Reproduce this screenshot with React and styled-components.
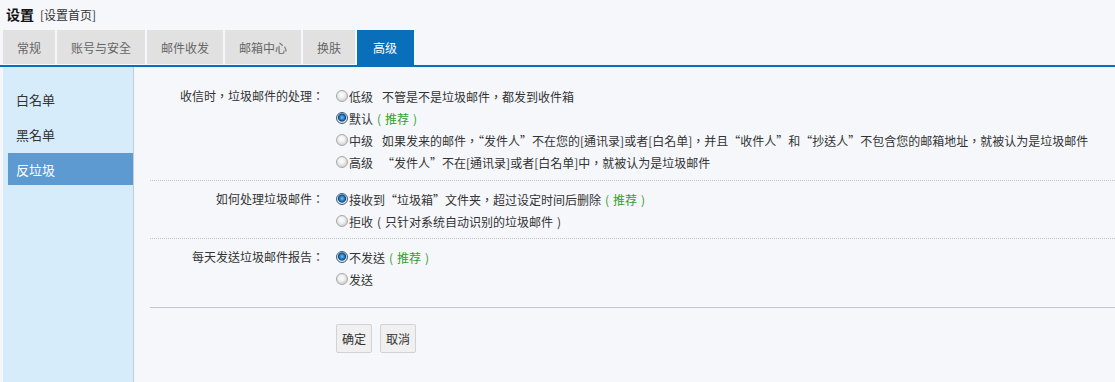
import React from "react";
import styled, { createGlobalStyle } from "styled-components";

const GlobalStyle = createGlobalStyle`
  html, body {
    margin: 0;
    padding: 0;
    background: #f5f7fb;
    font-family: "Noto Sans CJK TC", "Noto Sans CJK SC", sans-serif;
    font-size: 12px;
    color: #333;
  }
`;

const Page = styled.div`
  display: flex;
  flex-direction: column;
  height: 382px;
  overflow: hidden;
`;

const Header = styled.div`
  display: flex;
  align-items: baseline;
  gap: 6px;
  height: 30px;
  padding: 4px 0 0 6px;
  box-sizing: border-box;
`;

const Title = styled.span`
  font-size: 14px;
  font-weight: bold;
  color: #111;
`;

const HomeLink = styled.a`
  font-size: 12px;
  color: #333;
  text-decoration: none;
`;

const TabBar = styled.div`
  display: flex;
  gap: 2px;
  padding-left: 3px;
  height: 35px;
  border-bottom: 2px solid #0a6fbb;
`;

const Tab = styled.div`
  display: flex;
  align-items: center;
  padding: 0 14px;
  font-size: 12px;
  height: ${({ $active }) => ($active ? "35px" : "34px")};
  background: ${({ $active }) => ($active ? "#0a6fbb" : "#e1e1e1")};
  color: ${({ $active }) => ($active ? "#fff" : "#666")};
  ${({ $active }) => $active && "padding: 0 17px 0 16px;"}
`;

const Body = styled.div`
  flex: 1;
  display: flex;
`;

const Sidebar = styled.div`
  width: 125px;
  margin-left: 3px;
  padding: 16px 0 0 5px;
  background: #d7ecfb;
  border-right: 1px solid #c3ccd4;
  display: flex;
  flex-direction: column;
  gap: 3px;
`;

const SideItem = styled.div`
  height: 32px;
  display: flex;
  align-items: center;
  padding-left: 8px;
  font-size: 13px;
  background: ${({ $active }) => ($active ? "#5d9ad2" : "transparent")};
  color: ${({ $active }) => ($active ? "#fff" : "#333")};
`;

const Content = styled.div`
  flex: 1;
  padding-left: 16px;
`;

const Section = styled.div`
  display: flex;
  padding: ${({ $pad }) => $pad};
  border-bottom: ${({ $solid }) =>
    $solid ? "1px solid #bfcacf" : "1px dotted #c2c2c2"};
`;

const Label = styled.div`
  width: 174px;
  flex-shrink: 0;
  text-align: right;
  line-height: 22px;
`;

const Options = styled.div`
  display: flex;
  flex-direction: column;
  padding-left: 12px;
`;

const Option = styled.div`
  display: flex;
  align-items: center;
  height: 22px;
  white-space: pre;
`;

const Radio = styled.span`
  width: 12px;
  height: 12px;
  border-radius: 50%;
  margin-right: 1px;
  box-sizing: border-box;
  flex-shrink: 0;
  border: 1px solid ${({ $checked }) => ($checked ? "#3a5d7f" : "#a8a8a8")};
  background: ${({ $checked }) =>
    $checked
      ? "radial-gradient(circle at 50% 45%, #6cc0f5 0, #1d79c9 2.5px, #14456f 3.6px, #dbe6ee 4.6px)"
      : "radial-gradient(circle at 45% 40%, #ffffff 0, #f0f0f0 3px, #d6d6d6 5.5px)"};
`;

const Level = styled.span`
  margin-right: 9px;
`;

const Paren = styled.span`
  display: inline-block;
  width: 12px;
  text-align: center;
`;

const Green = styled.span`
  color: #34a02c;
`;

const Buttons = styled.div`
  display: flex;
  gap: 8px;
  padding: 16px 0 0 186px;
`;

const Button = styled.button`
  height: 29px;
  padding: 0 5px;
  font-family: inherit;
  font-size: 12px;
  color: #333;
  background: #f0f0f0;
  border: 1px solid #d2d2d2;
  border-radius: 2px;
`;

const tabs = ["常规", "账号与安全", "邮件收发", "邮箱中心", "换肤", "高级"];
const sideItems = ["白名单", "黑名单", "反垃圾"];

const sections = [
  {
    label: "收信时，垃圾邮件的处理：",
    pad: "18px 0 7px",
    options: [
      { level: "低级", text: "不管是不是垃圾邮件，都发到收件箱" },
      { text: "默认", rec: true, checked: true },
      {
        level: "中级",
        text: "如果发来的邮件，“发件人”不在您的[通讯录]或者[白名单]，并且“收件人”和“抄送人”不包含您的邮箱地址，就被认为是垃圾邮件",
      },
      { level: "高级", text: "“发件人”不在[通讯录]或者[白名单]中，就被认为是垃圾邮件" },
    ],
  },
  {
    label: "如何处理垃圾邮件：",
    pad: "7px 0 6px",
    options: [
      { text: "接收到“垃圾箱”文件夹，超过设定时间后删除", rec: true, checked: true },
      { text: "拒收", note: "只针对系统自动识别的垃圾邮件" },
    ],
  },
  {
    label: "每天发送垃圾邮件报告：",
    pad: "7px 0 17px",
    solid: true,
    options: [
      { text: "不发送", rec: true, checked: true },
      { text: "发送" },
    ],
  },
];

export default function App() {
  return (
    <Page>
      <GlobalStyle />
      <Header>
        <Title>设置</Title>
        <HomeLink href="#">[设置首页]</HomeLink>
      </Header>
      <TabBar>
        {tabs.map((t, i) => (
          <Tab key={t} $active={i === tabs.length - 1}>
            {t}
          </Tab>
        ))}
      </TabBar>
      <Body>
        <Sidebar>
          {sideItems.map((s, i) => (
            <SideItem key={s} $active={i === 2}>
              {s}
            </SideItem>
          ))}
        </Sidebar>
        <Content>
          {sections.map((sec) => (
            <Section key={sec.label} $pad={sec.pad} $solid={sec.solid}>
              <Label>{sec.label}</Label>
              <Options>
                {sec.options.map((o) => (
                  <Option key={o.text}>
                    <Radio $checked={o.checked} />
                    {o.level && <Level>{o.level}</Level>}
                    {o.text}
                    {o.note && (
                      <span>
                        <Paren>(</Paren>
                        {o.note}
                        <Paren>)</Paren>
                      </span>
                    )}
                    {o.rec && (
                      <Green>
                        <Paren>(</Paren>推荐<Paren>)</Paren>
                      </Green>
                    )}
                  </Option>
                ))}
              </Options>
            </Section>
          ))}
          <Buttons>
            <Button>确定</Button>
            <Button>取消</Button>
          </Buttons>
        </Content>
      </Body>
    </Page>
  );
}
